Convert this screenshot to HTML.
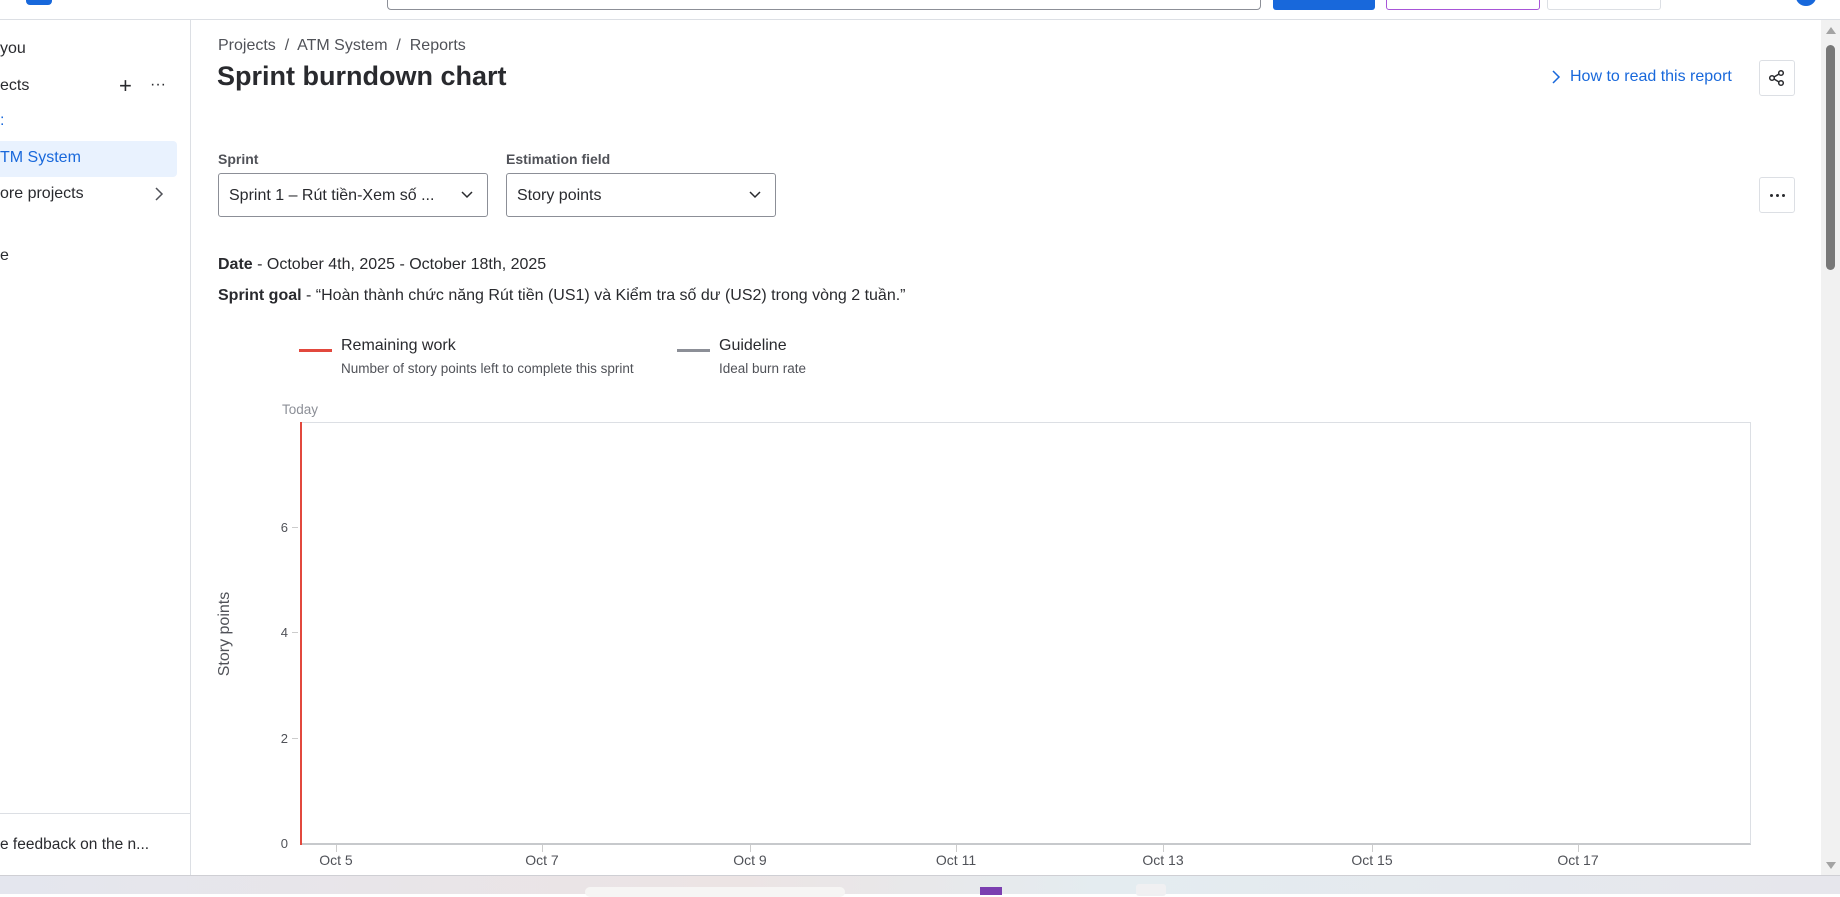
<!DOCTYPE html>
<html><head><meta charset="utf-8"><style>
*{margin:0;padding:0;box-sizing:border-box}
body{width:1840px;height:894px;overflow:hidden;background:#fff;font-family:"Liberation Sans","Noto Sans CJK SC",sans-serif;color:#292a2e;position:relative}
.a{position:absolute;white-space:nowrap}
.sel{position:absolute;border:1px solid #8c8f97;border-radius:3px;height:44px;top:173px;font-size:16px;padding:13px 10px;color:#292a2e}
.sel svg{position:absolute;right:14px;top:17px}
.yl{position:absolute;font-size:13px;color:#505258;right:1552px}
.xl{position:absolute;top:852px;font-size:14px;color:#505258;transform:translateX(-50%)}
.tick{position:absolute;width:1px;height:7px;background:#ccc;top:845px}
</style></head><body>
<div class="a" style="left:0;top:19px;width:1840px;height:1px;background:#dcdfe4"></div>
<div class="a" style="left:26px;top:-8px;width:26px;height:13px;background:#1868db;border-radius:4px"></div>
<div class="a" style="left:387px;top:-10px;width:874px;height:20px;border:1px solid #8c8f97;border-radius:4px"></div>
<div class="a" style="left:1273px;top:-6px;width:102px;height:16px;background:#1868db;border-radius:3px"></div>
<div class="a" style="left:1386px;top:-6px;width:154px;height:16px;border:1px solid #a855d8;border-radius:3px"></div>
<div class="a" style="left:1547px;top:-6px;width:114px;height:16px;border:1px solid #dcdfe4;border-radius:3px"></div>
<div class="a" style="left:1796px;top:-12px;width:20px;height:18px;background:#1868db;border-radius:50%"></div>
<div class="a" style="left:190px;top:20px;width:1px;height:855px;background:#dcdfe4"></div>
<div class="a" style="left:0;top:40px;font-size:16px">you</div>
<div class="a" style="left:0;top:77px;font-size:16px">ects</div>
<div class="a" style="left:119px;top:73px;font-size:22px;font-weight:300">+</div>
<div class="a" style="left:150px;top:76px;font-size:16px">···</div>
<div class="a" style="left:0;top:112px;font-size:16px;color:#1868db">:</div>
<div class="a" style="left:0;top:141px;width:177px;height:36px;background:#e9f2fe;border-radius:0 4px 4px 0"></div>
<div class="a" style="left:0;top:149px;font-size:16px;color:#1868db">TM System</div>
<div class="a" style="left:0;top:185px;font-size:16px">ore projects</div>
<svg class="a" style="left:154px;top:187px" width="10" height="14"><path d="M2 1l6 6-6 6" fill="none" stroke="#505258" stroke-width="1.5"/></svg>
<div class="a" style="left:0;top:247px;font-size:16px">e</div>
<div class="a" style="left:0;top:813px;width:190px;height:1px;background:#dcdfe4"></div>
<div class="a" style="left:0;top:836px;font-size:15.5px">e feedback on the n...</div>
<div class="a" style="left:218px;top:37px;font-size:16px;color:#505258">Projects &nbsp;/&nbsp; ATM System &nbsp;/&nbsp; Reports</div>
<div class="a" style="left:217px;top:61px;font-size:27px;font-weight:bold">Sprint burndown chart</div>
<svg class="a" style="left:1551px;top:70px" width="10" height="14"><path d="M2 1l6 6-6 6" fill="none" stroke="#1868db" stroke-width="1.5"/></svg>
<div class="a" style="left:1570px;top:68px;font-size:16px;color:#1868db">How to read this report</div>
<div class="a" style="left:1759px;top:60px;width:36px;height:36px;border:1px solid #dcdfe4;border-radius:3px"></div>
<svg class="a" style="left:1768px;top:69px" width="18" height="18"><circle cx="13" cy="4" r="2.3" fill="none" stroke="#292a2e" stroke-width="1.5"/><circle cx="4" cy="9" r="2.3" fill="none" stroke="#292a2e" stroke-width="1.5"/><circle cx="13" cy="14" r="2.3" fill="none" stroke="#292a2e" stroke-width="1.5"/><path d="M6 8l5-3M6 10l5 3" stroke="#292a2e" stroke-width="1.5"/></svg>
<div class="a" style="left:1759px;top:177px;width:36px;height:36px;border:1px solid #dcdfe4;border-radius:3px"></div>
<div class="a" style="left:1770px;top:194px;width:3px;height:3px;background:#292a2e;border-radius:50%"></div>
<div class="a" style="left:1776px;top:194px;width:3px;height:3px;background:#292a2e;border-radius:50%"></div>
<div class="a" style="left:1782px;top:194px;width:3px;height:3px;background:#292a2e;border-radius:50%"></div>
<div class="a" style="left:218px;top:151px;font-size:14px;font-weight:bold;color:#505258">Sprint</div>
<div class="a" style="left:506px;top:151px;font-size:14px;font-weight:bold;color:#505258">Estimation field</div>
<div class="sel" style="left:218px;width:270px">Sprint 1 – Rút tiền-Xem số ...<svg width="12" height="8"><path d="M1 1l5 5 5-5" fill="none" stroke="#292a2e" stroke-width="1.5"/></svg></div>
<div class="sel" style="left:506px;width:270px">Story points<svg width="12" height="8"><path d="M1 1l5 5 5-5" fill="none" stroke="#292a2e" stroke-width="1.5"/></svg></div>
<div class="a" style="left:218px;top:256px;font-size:16px"><b>Date</b> - October 4th, 2025 - October 18th, 2025</div>
<div class="a" style="left:218px;top:287px;font-size:16px"><b>Sprint goal</b> - “Hoàn thành chức năng Rút tiền (US1) và Kiểm tra số dư (US2) trong vòng 2 tuần.”</div>
<div class="a" style="left:299px;top:349px;width:33px;height:3px;background:#e2483d"></div>
<div class="a" style="left:341px;top:337px;font-size:16px">Remaining work</div>
<div class="a" style="left:341px;top:361px;font-size:13.5px;color:#505258">Number of story points left to complete this sprint</div>
<div class="a" style="left:677px;top:349px;width:33px;height:3px;background:#8c8f97"></div>
<div class="a" style="left:719px;top:337px;font-size:16px">Guideline</div>
<div class="a" style="left:719px;top:361px;font-size:13.5px;color:#505258">Ideal burn rate</div>
<div class="a" style="left:282px;top:402px;font-size:13.5px;color:#8c8f97">Today</div>
<div class="a" style="left:301px;top:422px;width:1450px;height:423px;border:1px solid #dcdfe4;border-bottom:2px solid #c7c9cc"></div>
<div class="a" style="left:300px;top:422px;width:2px;height:423px;background:#e2483d"></div>
<div class="yl" style="top:520px">6</div>
<div class="yl" style="top:625px">4</div>
<div class="yl" style="top:731px">2</div>
<div class="yl" style="top:836px">0</div>
<div class="a" style="left:292px;top:527px;width:6px;height:1px;background:#ccc"></div>
<div class="a" style="left:292px;top:632px;width:6px;height:1px;background:#ccc"></div>
<div class="a" style="left:292px;top:738px;width:6px;height:1px;background:#ccc"></div>
<div class="a" style="left:175px;top:625px;font-size:16px;color:#505258;transform:rotate(-90deg);width:100px;text-align:center">Story points</div>
<div class="tick" style="left:336px"></div><div class="xl" style="left:336px">Oct 5</div>
<div class="tick" style="left:542px"></div><div class="xl" style="left:542px">Oct 7</div>
<div class="tick" style="left:750px"></div><div class="xl" style="left:750px">Oct 9</div>
<div class="tick" style="left:956px"></div><div class="xl" style="left:956px">Oct 11</div>
<div class="tick" style="left:1163px"></div><div class="xl" style="left:1163px">Oct 13</div>
<div class="tick" style="left:1372px"></div><div class="xl" style="left:1372px">Oct 15</div>
<div class="tick" style="left:1578px"></div><div class="xl" style="left:1578px">Oct 17</div>
<div class="a" style="left:1821px;top:20px;width:19px;height:855px;background:#f1f1f1"></div>
<div class="a" style="left:1826px;top:27px;width:0;height:0;border-left:5px solid transparent;border-right:5px solid transparent;border-bottom:7px solid #a3a3a3"></div>
<div class="a" style="left:1826px;top:45px;width:9px;height:225px;background:#787878;border-radius:5px"></div>
<div class="a" style="left:1826px;top:862px;width:0;height:0;border-left:5px solid transparent;border-right:5px solid transparent;border-top:7px solid #a3a3a3"></div>
<div class="a" style="left:0;top:875px;width:1840px;height:19px;background:linear-gradient(90deg,#e4e6ee,#ece4e4 40%,#e4ecf0 60%,#e6e6ec);border-top:1px solid #cfcfd4"></div>
<div class="a" style="left:585px;top:887px;width:260px;height:10px;background:#f6f5f4;border-radius:8px"></div>
<div class="a" style="left:980px;top:887px;width:22px;height:8px;background:#7b3fb0"></div>
<div class="a" style="left:1136px;top:884px;width:30px;height:12px;background:#f0f0f2;border-radius:3px"></div>
</body></html>
